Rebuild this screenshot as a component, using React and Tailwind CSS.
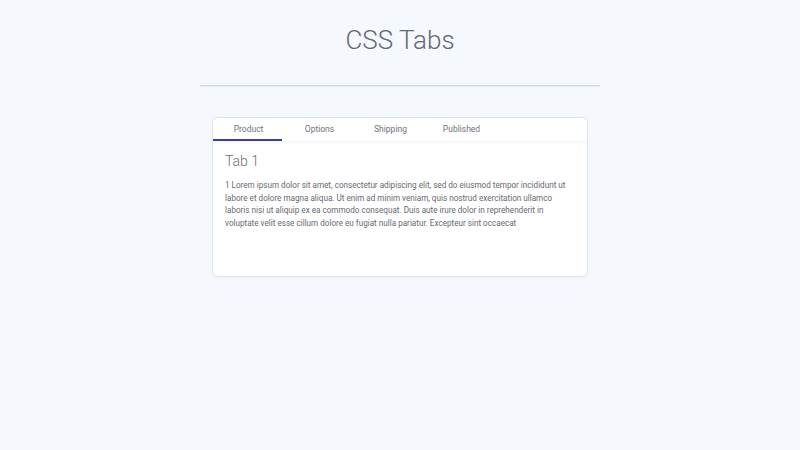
import React, { useState } from 'react';

const TABS = ['Product', 'Options', 'Shipping', 'Published'];

const TEXT =
  '1 Lorem ipsum dolor sit amet, consectetur adipiscing elit, sed do eiusmod tempor incididunt ut labore et dolore magna aliqua. Ut enim ad minim veniam, quis nostrud exercitation ullamco laboris nisi ut aliquip ex ea commodo consequat. Duis aute irure dolor in reprehenderit in voluptate velit esse cillum dolore eu fugiat nulla pariatur. Excepteur sint occaecat';

export default function App() {
  const [active, setActive] = useState(0);

  return (
    <div className="min-h-[450px] w-full bg-[#f5f8fd] font-['Roboto',sans-serif]">
      <div className="mx-auto w-[400px] pt-[24px]">
        <h1 className="text-center text-[26px] font-light leading-[32px] text-[#646876]">CSS Tabs</h1>
        <div className="mt-[29px] h-[2px] border-t border-[#d3d8de] bg-[#e8ecf1]" />
      </div>

      {/* Card */}
      <div className="mx-auto mt-[30px] h-[160px] w-[376px] overflow-hidden rounded-[6px] border border-[#e1e6ee] bg-white shadow-[0_1px_3px_rgba(30,40,80,0.05)]">
        <div className="flex h-[23px] shadow-[0_2px_3px_rgba(30,40,80,0.04)]">
          {TABS.map((t, i) => (
            <button
              key={t}
              onClick={() => setActive(i)}
              className={`relative w-[71px] text-center text-[8.5px] leading-[19px] text-[#707380] ${
                i === active ? 'after:absolute after:bottom-0 after:left-0 after:h-[2px] after:w-[69px] after:bg-[#3c3cae]' : ''
              }`}
            >
              {t}
            </button>
          ))}
        </div>
        <div className="px-[12px] pt-[10px]">
          <h2 className="text-[14px] font-light leading-[20px] text-[#6b6e78]">Tab {active + 1}</h2>
          <p className="mt-[8px] text-[8.15px] leading-[12.6px] text-[#666972]">{TEXT}</p>
        </div>
      </div>
    </div>
  );
}
